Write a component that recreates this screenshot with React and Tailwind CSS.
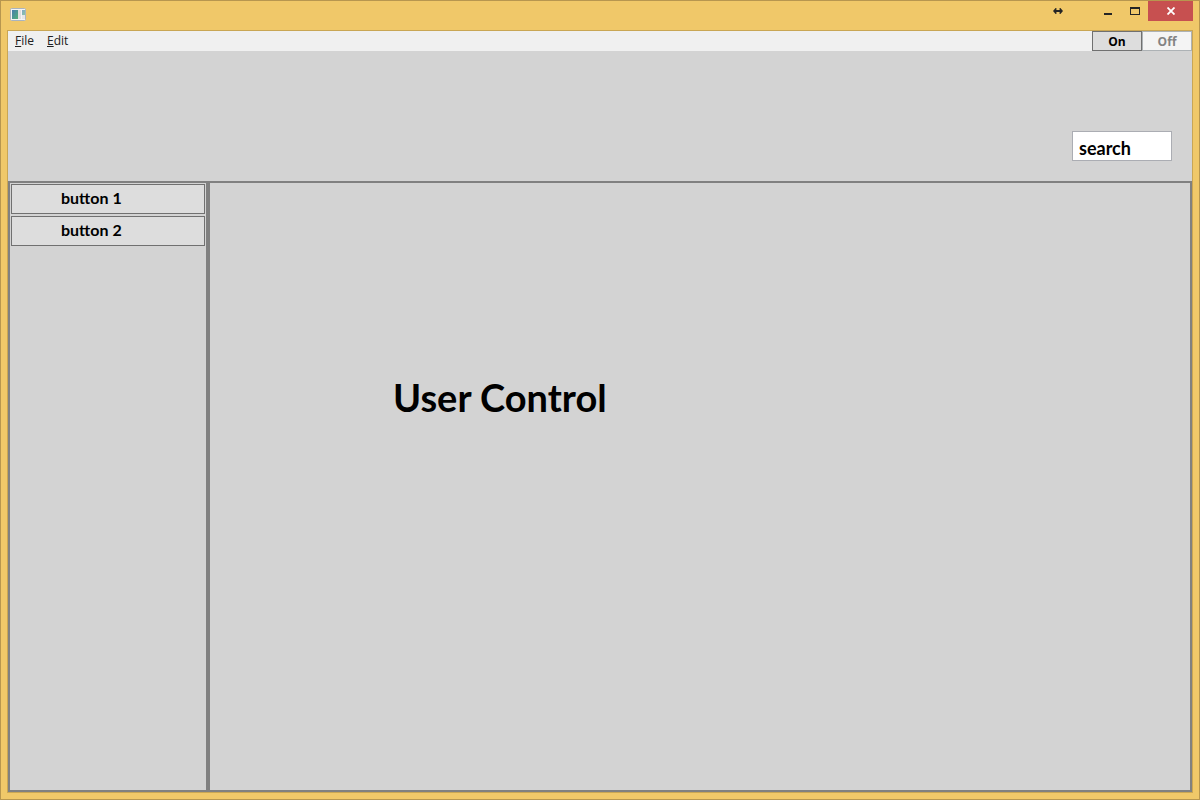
import React from "react";

const heading = "font-['Lato',sans-serif] font-bold text-black";

function AppIcon() {
  return (
    <svg width="16" height="14" viewBox="0 0 16 14" aria-hidden="true">
      <defs>
        <linearGradient id="screen" x1="0" y1="0" x2="1" y2="1">
          <stop offset="0" stopColor="#477cae" />
          <stop offset="1" stopColor="#4fb078" />
        </linearGradient>
      </defs>
      <rect x="0.5" y="0.5" width="15" height="12" rx="1" fill="#f4f4f4" stroke="#a9b4c0" />
      <rect x="2" y="2" width="6" height="9" fill="url(#screen)" />
      <rect x="8" y="2" width="3" height="9" fill="#dedede" />
      <rect x="12" y="2" width="3" height="5" fill="url(#screen)" opacity="0.65" />
      <rect x="12" y="7" width="3" height="4" fill="#e6e6e6" />
    </svg>
  );
}

function TitleBar() {
  return (
    <header className="flex h-[29px] shrink-0 items-start justify-between pl-[9px] pr-[6px]">
      <div className="pt-[7px]">
        <AppIcon />
      </div>
      <div className="flex h-5 items-stretch text-[#252525]">
        <button aria-label="Resize" className="flex w-8 items-center justify-center">
          <svg width="10" height="6" viewBox="0 0 10 6" className="block" aria-hidden="true">
            <path d="M0 3L2.6 0H3.4V2H6.6V0H7.4L10 3L7.4 6H6.6V4H3.4V6H2.6Z" fill="currentColor" />
          </svg>
        </button>
        <button aria-label="Minimize" className="ml-5 flex w-[27px] items-center justify-center">
          <svg width="10" height="10" viewBox="0 0 10 10" aria-hidden="true">
            <path d="M1 7H9V9H1Z" fill="currentColor" />
          </svg>
        </button>
        <button aria-label="Maximize" className="flex w-[27px] items-center justify-center">
          <svg width="10" height="8" viewBox="0 0 10 8" aria-hidden="true">
            <path d="M0 0H10V8H0Z M1 2V7H9V2Z" fillRule="evenodd" fill="currentColor" />
          </svg>
        </button>
        <button aria-label="Close" className="flex w-[45px] items-center justify-center bg-[#c75050] text-white">
          <svg width="8" height="8" viewBox="0 0 8 8" aria-hidden="true">
            <path d="M0.5 0.5L7.5 7.5M7.5 0.5L0.5 7.5" stroke="currentColor" strokeWidth="1.8" />
          </svg>
        </button>
      </div>
    </header>
  );
}

function MenuBar() {
  return (
    <div className="flex h-5 shrink-0 items-stretch justify-between bg-[#f0f0f0]">
      <nav className="flex items-center gap-[13px] pl-[7px] font-['Open_Sans',sans-serif] text-xs text-[#212121]">
        <button><span className="underline">F</span>ile</button>
        <button><span className="underline">E</span>dit</button>
      </nav>
      <div className="flex font-['Open_Sans',sans-serif] text-xs font-bold">
        <button className="flex w-[50px] items-center justify-center border border-[#707070] bg-[#dddddd] pt-px text-black">On</button>
        <button disabled className="flex w-[50px] items-center justify-center border border-[#adb2b5] bg-[#f4f4f4] pt-px text-[#838383]">Off</button>
      </div>
    </div>
  );
}

function SideButton({ children }) {
  return (
    <button className={`${heading} flex h-[30px] items-center border border-[#707070] bg-[#dddddd] pb-[2px] pl-[49px] text-base`}>
      {children}
    </button>
  );
}

export default function App() {
  return (
    <div className="flex min-h-screen flex-col border border-[#b7964f] bg-[#f0c869]">
      <TitleBar />
      <div className="mx-[6px] mb-[6px] flex grow flex-col border border-[#c9a654] bg-[#d3d3d3]">
        <MenuBar />
        <div className="flex h-[130px] shrink-0 items-end justify-end px-5 pb-5">
          <input
            type="text"
            aria-label="Search"
            defaultValue="search"
            className={`${heading} h-[30px] w-[100px] border border-[#abadb3] bg-white px-[6px] pt-1 text-lg`}
          />
        </div>
        <div className="flex grow border-2 border-[#808080]">
          <aside className="flex w-[196px] shrink-0 flex-col gap-[2px] p-px">
            <SideButton>button 1</SideButton>
            <SideButton>button 2</SideButton>
          </aside>
          <main className="grow border-l-4 border-[#808080] pl-[183px] pt-[190px]">
            <h1 className={`${heading} text-[38px] leading-[48px]`}>User Control</h1>
          </main>
        </div>
      </div>
    </div>
  );
}
